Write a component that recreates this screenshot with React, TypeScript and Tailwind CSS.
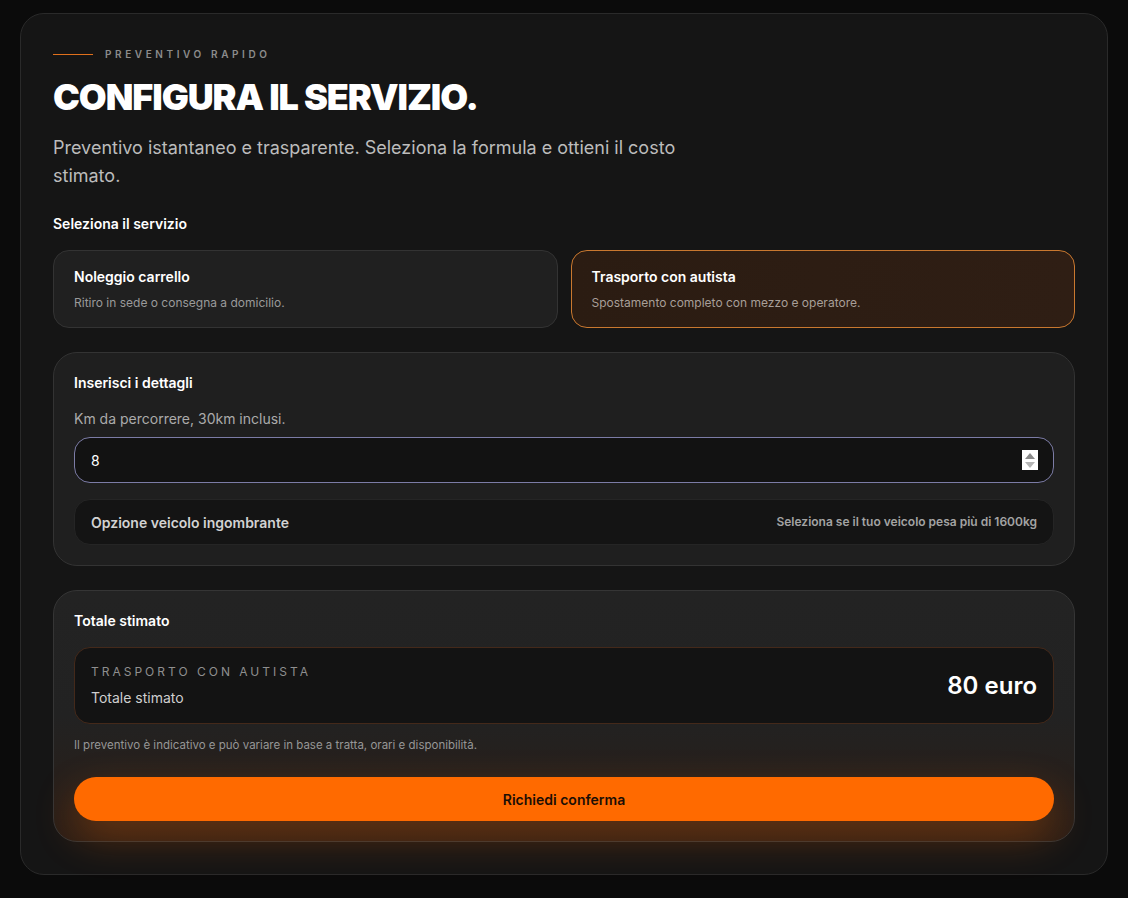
import { useState } from "react";

const services = [
  { id: "carrello", title: "Noleggio carrello", desc: "Ritiro in sede o consegna a domicilio." },
  { id: "autista", title: "Trasporto con autista", desc: "Spostamento completo con mezzo e operatore." },
];

export default function App() {
  const [selected, setSelected] = useState("autista");
  const [km, setKm] = useState("8");

  return (
    <div className="min-h-screen bg-[#0b0b0b] px-5 py-[13px] font-['Inter',sans-serif] text-white">
      <div className="rounded-[24px] border border-[#2a2a2a] bg-[#151515] px-8 pb-8 pt-[33px]">
        <div className="flex items-center gap-3">
          <span className="h-px w-10 bg-[#e0701c]" />
          <p className="text-[10px] font-semibold uppercase tracking-[0.36em] text-[#8c8c8c]">Preventivo rapido</p>
        </div>
        <h1 className="mt-[13px] text-[36px] font-black leading-[44px] tracking-[-0.03em] text-white">
          CONFIGURA IL SERVIZIO.
        </h1>
        <p className="mt-[15px] max-w-2xl text-[18px] leading-[28px] text-[#bcbcbc]">
          Preventivo istantaneo e trasparente. Seleziona la formula e ottieni il costo stimato.
        </p>

        <p className="mt-[23px] text-[14px] font-semibold text-white">Seleziona il servizio</p>
        <div className="mt-[16px] grid grid-cols-2 gap-[13px]">
          {services.map((s) => {
            const active = s.id === selected;
            return (
              <button
                key={s.id}
                onClick={() => setSelected(s.id)}
                className={
                  active
                    ? "h-[78px] rounded-[16px] border border-[#c9782f] bg-gradient-to-r from-[#2b1c12] to-[#2f1e14] px-5 text-left"
                    : "h-[78px] rounded-[16px] border border-[#333] bg-[#202020] px-5 text-left"
                }
              >
                <p className="text-[14px] font-semibold text-white">{s.title}</p>
                <p className={active ? "mt-[7px] text-[12px] text-[#a89f98]" : "mt-[7px] text-[12px] text-[#9a9a9a]"}>
                  {s.desc}
                </p>
              </button>
            );
          })}
        </div>

        <div className="mt-[24px] rounded-[24px] border border-[#333] bg-[#1f1f1f] px-5 pb-5 pt-[19px]">
          <p className="text-[14px] font-semibold text-white">Inserisci i dettagli</p>
          <p className="mt-[15px] text-[14px] text-[#ababab]">Km da percorrere, 30km inclusi.</p>
          <div className="relative mt-[8px]">
            <input
              type="number"
              value={km}
              onChange={(e) => setKm(e.target.value)}
              className="h-[46px] w-full rounded-[16px] border border-[#7c7ca6] bg-[#121212] px-4 text-[14px] text-white outline-none [&::-webkit-inner-spin-button]:appearance-none"
            />
            <div className="absolute right-[16px] top-[13px] flex h-[20px] w-[16px] flex-col items-center justify-center gap-[3px] bg-white">
              <svg width="10" height="6" viewBox="0 0 10 6"><path d="M5 0L10 6H0z" fill="#8a8a8a" /></svg>
              <svg width="10" height="6" viewBox="0 0 10 6"><path d="M0 0h10L5 6z" fill="#b5b5b5" /></svg>
            </div>
          </div>
          <div className="mt-[16px] flex h-[46px] items-center justify-between rounded-[16px] border border-[#252525] bg-[#141414] px-4">
            <p className="text-[14px] font-semibold text-[#d2d2d2]">Opzione veicolo ingombrante</p>
            <p className="text-[12px] font-semibold text-[#a3a3a3]">Seleziona se il tuo veicolo pesa più di 1600kg</p>
          </div>
        </div>

        <div className="mt-[24px] rounded-[24px] border border-[#353535] bg-gradient-to-b from-[#232323] via-[#222] to-[#2a1d15] px-5 pb-5 pt-[19px]">
          <p className="text-[14px] font-semibold text-white">Totale stimato</p>
          <div className="mt-[16px] flex h-[77px] items-center justify-between rounded-[16px] border border-[#44291a] bg-[#131313] px-4">
            <div>
              <p className="text-[12px] uppercase tracking-[0.25em] text-[#8f8f8f]">Trasporto con autista</p>
              <p className="mt-[6px] text-[14px] text-[#cfcfcf]">Totale stimato</p>
            </div>
            <p className="text-[24px] font-semibold text-white">80 euro</p>
          </div>
          <p className="mt-[13px] text-[11.5px] text-[#969696]">
            Il preventivo è indicativo e può variare in base a tratta, orari e disponibilità.
          </p>
          <button className="mt-[23px] h-[44px] w-full rounded-full bg-[#ff6a00] text-[14px] font-semibold text-[#1b0e05] shadow-[0_16px_40px_rgba(255,106,0,0.3)]">
            Richiedi conferma
          </button>
        </div>
      </div>
    </div>
  );
}
